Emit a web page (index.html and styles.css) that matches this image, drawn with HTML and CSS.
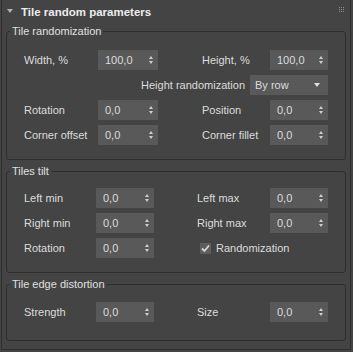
FILE: index.html
```html
<!DOCTYPE html>
<html lang="en">
<head>
  <meta charset="UTF-8" />
  <title>Tile random parameters</title>
  <link rel="stylesheet" href="styles.css">
</head>
<body>

<div class="rollout">
  <div class="rollout-head">
    <span class="caret"></span>
    <span class="rollout-title">Tile random parameters</span>
    <svg class="grip" width="5" height="5" viewBox="0 0 5 5">
      <rect x="0" y="0" width="1" height="1"/><rect x="2" y="0" width="1" height="1"/><rect x="4" y="0" width="1" height="1"/>
      <rect x="0" y="2" width="1" height="1"/><rect x="2" y="2" width="1" height="1"/><rect x="4" y="2" width="1" height="1"/>
      <rect x="0" y="4" width="1" height="1"/><rect x="2" y="4" width="1" height="1"/><rect x="4" y="4" width="1" height="1"/>
    </svg>
  </div>

  <fieldset class="group group-rand">
    <legend>Tile randomization</legend>
    <div class="grid grid-rand">
      <span class="lbl">Width, %</span>
      <div class="spin"><span>100,0</span><i class="arrows"></i></div>
      <span class="lbl second">Height, %</span>
      <div class="spin"><span>100,0</span><i class="arrows"></i></div>

      <div class="combo-row">
        <span class="lbl">Height randomization</span>
        <div class="combo"><span>By row</span><i class="combo-arrow"></i></div>
      </div>

      <span class="lbl">Rotation</span>
      <div class="spin"><span>0,0</span><i class="arrows"></i></div>
      <span class="lbl second">Position</span>
      <div class="spin"><span>0,0</span><i class="arrows"></i></div>

      <span class="lbl">Corner offset</span>
      <div class="spin"><span>0,0</span><i class="arrows"></i></div>
      <span class="lbl second">Corner fillet</span>
      <div class="spin"><span>0,0</span><i class="arrows"></i></div>
    </div>
  </fieldset>

  <fieldset class="group group-tilt">
    <legend>Tiles tilt</legend>
    <div class="grid grid-alt">
      <span class="lbl">Left min</span>
      <div class="spin"><span>0,0</span><i class="arrows"></i></div>
      <span class="lbl second">Left max</span>
      <div class="spin"><span>0,0</span><i class="arrows"></i></div>

      <span class="lbl">Right min</span>
      <div class="spin"><span>0,0</span><i class="arrows"></i></div>
      <span class="lbl second">Right max</span>
      <div class="spin"><span>0,0</span><i class="arrows"></i></div>

      <span class="lbl">Rotation</span>
      <div class="spin"><span>0,0</span><i class="arrows"></i></div>
      <label class="check-row">
        <span class="check">
          <svg width="11" height="11" viewBox="0 0 11 11"><path d="M2 5.5 L4.5 8 L9 2.5" fill="none" stroke="#d6d6d6" stroke-width="1.8"/></svg>
        </span>
        <span class="lbl">Randomization</span>
      </label>
    </div>
  </fieldset>

  <fieldset class="group group-edge">
    <legend>Tile edge distortion</legend>
    <div class="grid grid-alt">
      <span class="lbl">Strength</span>
      <div class="spin"><span>0,0</span><i class="arrows"></i></div>
      <span class="lbl second">Size</span>
      <div class="spin"><span>0,0</span><i class="arrows"></i></div>
    </div>
  </fieldset>
</div>

</body>
</html>
```

FILE: styles.css
```css
body {
  margin: 0;
  background: #444444;
  color: #dcdcdc;
  font-family: 'Liberation Sans', Arial, sans-serif;
  font-size: 11px;
}

.rollout {
  margin: 0 2px 2px 1px;
  border: 1px solid #2e2e2e;
  border-top: none;
  padding-bottom: 8px;
}

.rollout-head {
  height: 23px;
  display: flex;
  align-items: center;
  padding: 0 6px 0 5px;
}

.caret {
  width: 0;
  height: 0;
  border-left: 3px solid transparent;
  border-right: 3px solid transparent;
  border-top: 4px solid #b0b0b0;
  margin-right: 8px;
  margin-top: -1px;
}

.rollout-title {
  font-weight: bold;
  font-size: 11.5px;
  color: #ececec;
  flex: 1;
}

.grip {
  fill: #8c8c8c;
  margin-top: -4px;
}

.group {
  margin: 0 4px;
  padding: 0;
  min-width: 0;
  border: 1px solid #2e2e2e;
  border-radius: 3px;
}

.group + .group {
  margin-top: 3px;
}

.group legend {
  font-size: 11px;
  line-height: 16px;
  padding: 0 2px;
  margin-left: 3px;
  color: #e0e0e0;
}

.grid {
  display: grid;
  grid-auto-rows: 20px;
  row-gap: 5px;
  padding-left: 17px;
  align-items: center;
}

.group-rand .grid { padding-top: 11px; padding-bottom: 14px; }
.group-tilt .grid { padding-top: 9px; padding-bottom: 14px; }
.group-edge .grid { padding-top: 10px; padding-bottom: 18px; }

.grid-rand {
  grid-template-columns: 74px 60px 112px 58px;
}

.grid-alt {
  grid-template-columns: 72px 58px 116px 58px;
}

.lbl {
  white-space: nowrap;
}

.grid-rand .lbl.second {
  padding-left: 44px;
}

.grid-alt .lbl.second {
  padding-left: 43px;
}

.spin,
.combo {
  height: 20px;
  background: #595959;
  display: flex;
  align-items: center;
  padding-left: 7px;
  box-sizing: border-box;
}

.spin span,
.combo span {
  flex: 1;
}

.arrows {
  width: 5px;
  height: 8px;
  margin-right: 4px;
  position: relative;
}

.arrows::before,
.arrows::after {
  content: '';
  position: absolute;
  left: 0;
  border-left: 2.5px solid transparent;
  border-right: 2.5px solid transparent;
}

.arrows::before {
  top: 0;
  border-bottom: 3px solid #cfcfcf;
}

.arrows::after {
  bottom: 0;
  border-top: 3px solid #cfcfcf;
}

.combo-row {
  grid-column: 1 / -1;
  display: flex;
  justify-content: flex-end;
  align-items: center;
  gap: 5px;
}

.combo {
  width: 78px;
  padding-left: 5px;
}

.combo-arrow {
  width: 0;
  height: 0;
  border-left: 3.5px solid transparent;
  border-right: 3.5px solid transparent;
  border-top: 4px solid #e0e0e0;
  margin-right: 8px;
}

.check-row {
  grid-column: 3 / -1;
  display: flex;
  align-items: center;
  gap: 5px;
  padding-left: 46px;
}

.check {
  width: 11px;
  height: 11px;
  background: #5e5e5e;
  display: flex;
}
```
